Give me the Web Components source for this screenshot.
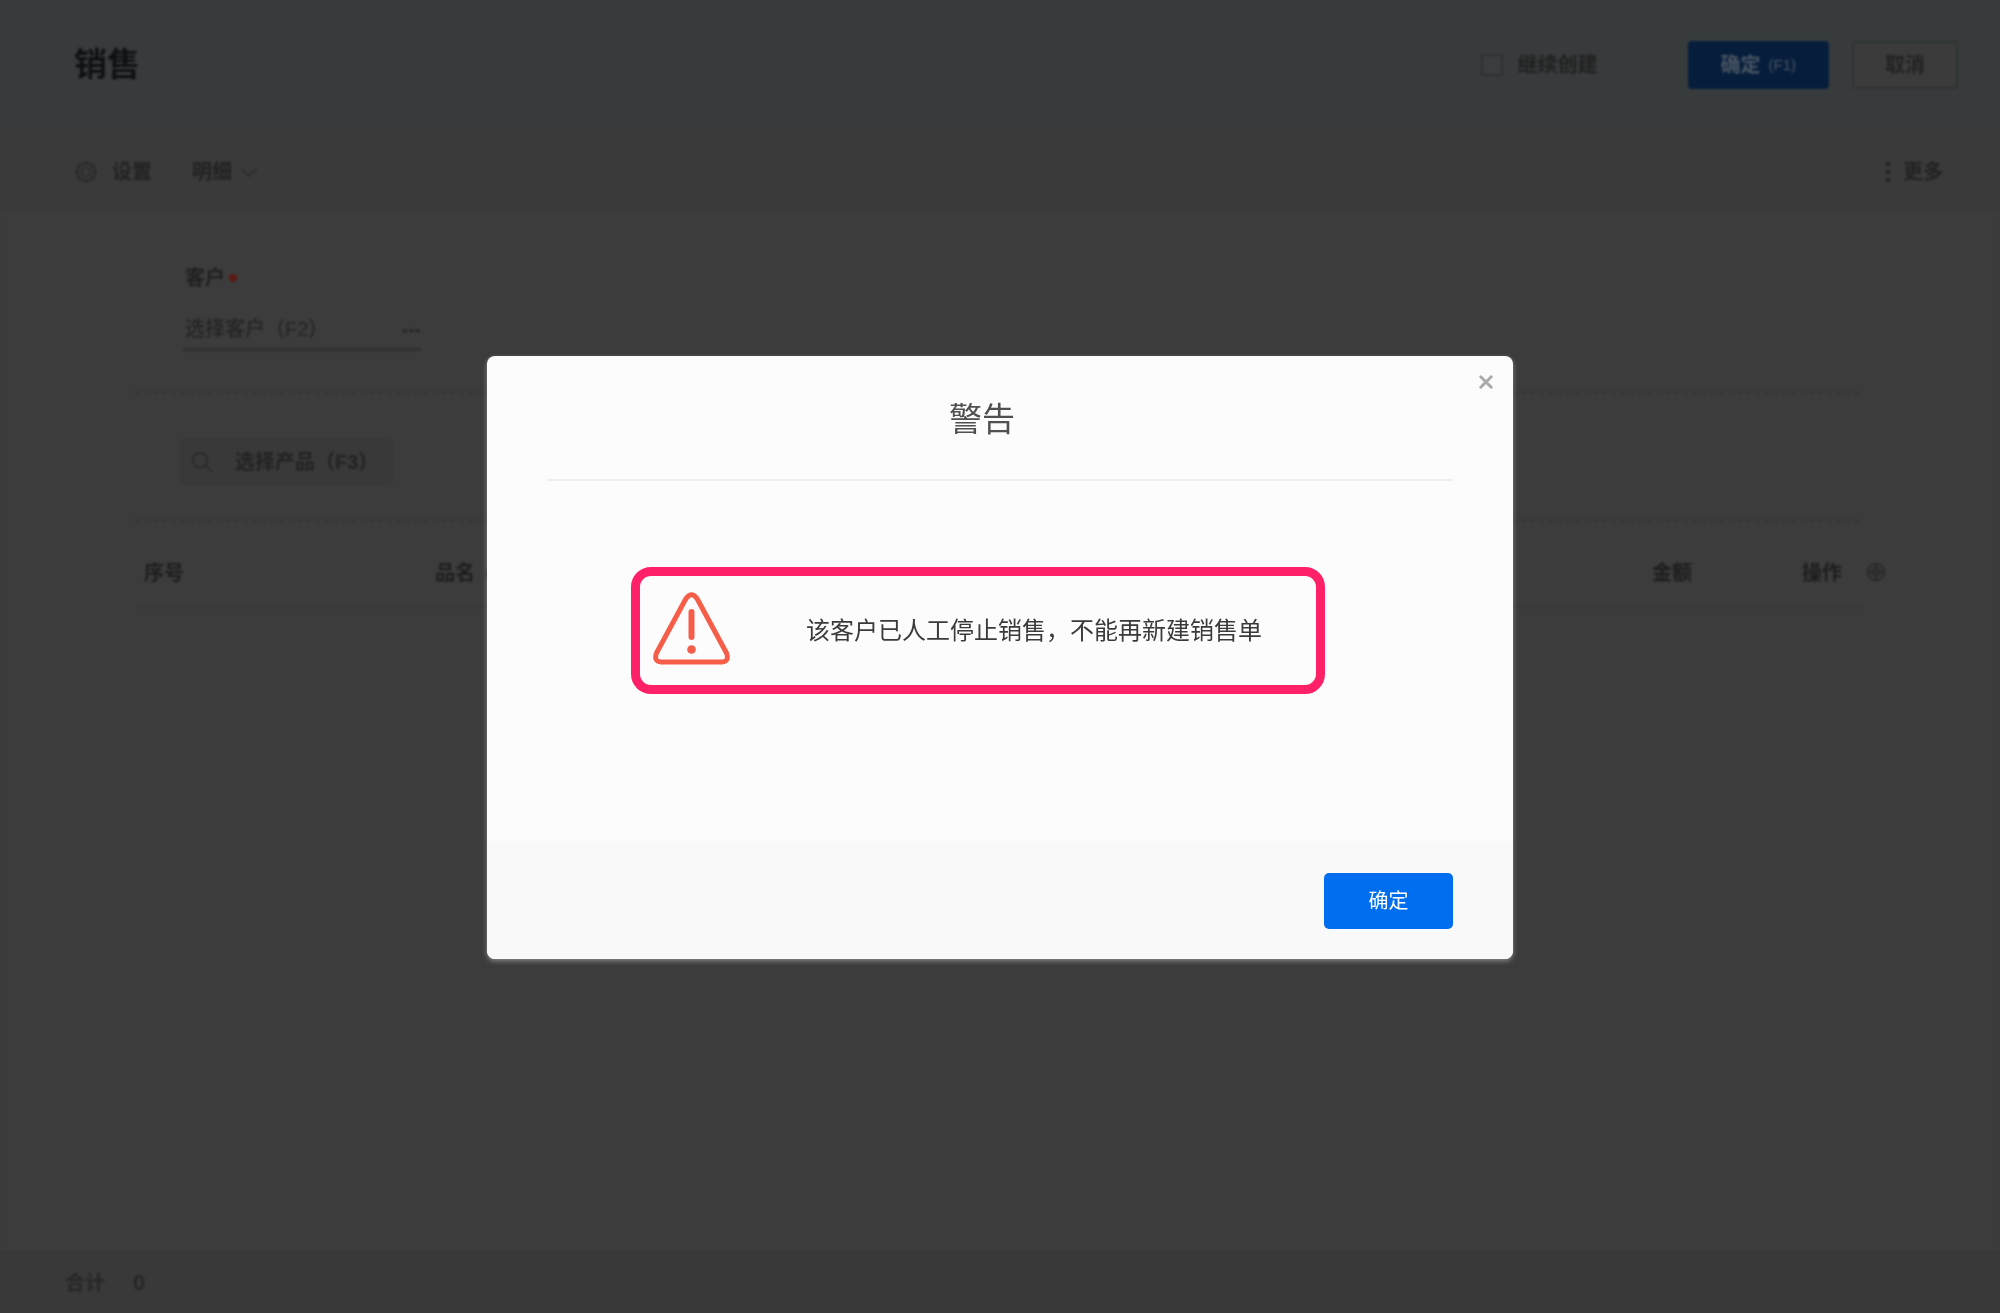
<!DOCTYPE html>
<html lang="zh-CN">
<head>
<meta charset="utf-8">
<meta name="viewport" content="width=device-width, initial-scale=1">
<title>销售</title>
<style>
    body {
        margin: 0;
        background: #3b3b3b;
        color: #202020;
        font: 20px/30px "Liberation Sans", "Noto Sans CJK SC", sans-serif;
    }
</style>
</head>
<body>
<sales-page>
    <page-header heading="销售"></page-header>
    <page-toolbar></page-toolbar>
    <sales-form></sales-form>
    <product-table></product-table>
    <page-total label="合计" value="0"></page-total>
</sales-page>
<warning-dialog heading="警告">
    <alert-message>该客户已人工停止销售，不能再新建销售单</alert-message>
</warning-dialog>

<script>
const render = (element, html) => {
    const shadow = element.attachShadow({ mode: 'open' });
    const template = document.createElement('template');
    template.innerHTML = html;
    shadow.appendChild(template.content.cloneNode(true));
};

const icons = {
    gear: '<circle cx="12" cy="12" r="10"/><circle cx="12" cy="12" r="5"/><path d="M12 0v4M12 20v4M0 12h4M20 12h4M3.500 3.500l3 3M17.500 17.500l3 3M3.500 20.500l3-3M17.500 6.500l3-3"/>',
    globe: '<circle cx="12" cy="12" r="10"/><circle cx="12" cy="12" r="5"/><path d="M12 2v20M2 12h20"/>',
    chevron: '<path d="M2 8l10 9 10-9"/>',
    search: '<circle cx="10" cy="10" r="8"/><path d="M16 16l7 7"/>',
    dots: '<path d="M4 14h5M11 14h5M18 14h5" stroke-width="3"/>',
    more: '<path d="M16 1v4M16 10v4M16 19v4" stroke-width="5"/>',
    close: '<path d="M5 5l14 14M19 5L5 19" stroke-width="4" stroke-linecap="round"/>'
};

class UiIcon extends HTMLElement {
    constructor() {
        super();
        render(this, `
            <style>
                :host {
                    display: inline-flex;
                    width: 22px;
                    height: 22px;
                    flex: none;
                }

                svg {
                    width: 100%;
                    height: 100%;
                    fill: none;
                    stroke: currentColor;
                    stroke-width: 2;
                }
            </style>
            <svg viewBox="0 0 24 24" aria-hidden="true">${icons[this.getAttribute('name')]}</svg>
        `);
    }
}

class SalesPage extends HTMLElement {
    constructor() {
        super();
        render(this, `
            <style>
                :host {
                    display: flex;
                    flex-direction: column;
                    min-height: 100vh;
                    background: #3c3c3c;
                    filter: blur(1px);
                }
            </style>
            <slot></slot>
        `);
    }
}

class PageHeader extends HTMLElement {
    constructor() {
        super();
        render(this, `
            <style>
                :host {
                    display: block;
                    background: #373b3c;
                }

                header {
                    display: flex;
                    align-items: center;
                    padding: 40px 42px 36px 74px;
                }

                h1 {
                    margin: 0 auto 0 0;
                    font-size: 33px;
                    line-height: 50px;
                    color: #0f1011;
                }

                label {
                    display: flex;
                    align-items: center;
                    gap: 15px;
                    margin-right: 90px;
                    font-weight: 700;
                }

                input {
                    appearance: none;
                    width: 22px;
                    height: 22px;
                    margin: 0;
                    border: 2px solid #2e3031;
                    border-radius: 3px;
                    background: #3b3c3d;
                }

                button {
                    height: 48px;
                    padding: 0 31px;
                    border: 2px solid #303233;
                    border-radius: 4px;
                    background: #3b3b3b;
                    font: inherit;
                    font-weight: 700;
                    color: #222;
                }

                .primary {
                    display: flex;
                    align-items: center;
                    gap: 8px;
                    margin-right: 23px;
                    border-color: #061e3c;
                    background: #061e3c;
                    color: #4a5563;
                }

                small {
                    font-size: 15px;
                    font-weight: 400;
                }
            </style>
            <header>
                <h1>${this.getAttribute('heading')}</h1>
                <label><input type="checkbox">继续创建</label>
                <button class="primary" type="button">确定<small>(F1)</small></button>
                <button type="button">取消</button>
            </header>
        `);
    }
}

class PageToolbar extends HTMLElement {
    constructor() {
        super();
        render(this, `
            <style>
                :host {
                    display: flex;
                    justify-content: space-between;
                    padding: 31px 57px 25px 75px;
                    background: #3a3a3a;
                }

                nav {
                    display: flex;
                    gap: 40px;
                }

                button {
                    display: flex;
                    align-items: center;
                    gap: 8px;
                    padding: 0;
                    border: 0;
                    background: none;
                    font: inherit;
                    font-weight: 700;
                    color: #222;
                }

                .settings {
                    gap: 15px;
                }

                .settings ui-icon, .detail ui-icon {
                    color: #292929;
                }

                .detail ui-icon {
                    width: 18px;
                    height: 18px;
                }
            </style>
            <nav>
                <button class="settings" type="button"><ui-icon name="gear"></ui-icon>设置</button>
                <button class="detail" type="button">明细<ui-icon name="chevron"></ui-icon></button>
            </nav>
            <button type="button"><ui-icon name="more"></ui-icon>更多</button>
        `);
    }
}

class SalesForm extends HTMLElement {
    constructor() {
        super();
        render(this, `
            <style>
                :host {
                    display: block;
                    padding: 51px 137px 0 135px;
                }

                .row {
                    padding: 0 48px;
                }

                label {
                    display: flex;
                    align-items: center;
                    gap: 4px;
                    margin-bottom: 16px;
                    padding-left: 2px;
                    font-weight: 700;
                }

                label i {
                    width: 8px;
                    height: 8px;
                    border-radius: 50%;
                    background: #5c1b15;
                }

                .field {
                    display: flex;
                    align-items: center;
                    box-sizing: border-box;
                    width: 238px;
                    height: 42px;
                    padding-left: 2px;
                    border-bottom: 3px solid #303030;
                }

                input {
                    flex: 1;
                    min-width: 0;
                    padding: 0;
                    border: 0;
                    background: none;
                    font: inherit;
                    font-weight: 500;
                    color: #242424;
                }

                input::placeholder {
                    color: #242424;
                    opacity: 1;
                }

                .field button {
                    display: flex;
                    padding: 0;
                    border: 0;
                    background: none;
                    color: #262626;
                }

                hr {
                    height: 3px;
                    margin: 40px 0 44px;
                    border: 0;
                    background: repeating-linear-gradient(90deg, #363636 0 5px, transparent 5px 9px);
                }

                hr:last-of-type {
                    margin: 34px 0 0;
                }

                .search {
                    display: flex;
                    align-items: center;
                    gap: 22px;
                    height: 47px;
                    margin-left: -2px;
                    padding: 0 14px 0 9px;
                    border: 1px solid #363636;
                    border-radius: 6px;
                    background: #393939;
                    font: inherit;
                    font-weight: 700;
                    color: #222;
                }

                .search ui-icon {
                    color: #2a2a2a;
                }
            </style>
            <div class="row">
                <label for="customer">客户<i></i></label>
                <div class="field">
                    <input id="customer" type="text" placeholder="选择客户（F2）">
                    <button type="button" aria-label="选择客户"><ui-icon name="dots"></ui-icon></button>
                </div>
            </div>
            <hr>
            <div class="row">
                <button class="search" type="button"><ui-icon name="search"></ui-icon>选择产品（F3）</button>
            </div>
            <hr>
        `);
    }
}

class ProductTable extends HTMLElement {
    constructor() {
        super();
        render(this, `
            <style>
                :host {
                    display: flex;
                    flex: 1;
                    align-items: flex-start;
                    gap: 3px;
                    padding: 0 114px 0 135px;
                }

                table {
                    flex: 1;
                    table-layout: fixed;
                    border-collapse: collapse;
                    border-bottom: 2px solid #393939;
                }

                th {
                    padding: 36px 9px 18px;
                    font-weight: 700;
                    text-align: left;
                    color: #1d1d1d;
                }

                th span {
                    display: flex;
                    align-items: center;
                    gap: 10px;
                }

                .number {
                    width: 273px;
                }

                .amount {
                    width: 132px;
                }

                .action {
                    width: 52px;
                }

                button {
                    display: flex;
                    margin-top: 40px;
                    padding: 0;
                    border: 0;
                    background: none;
                    color: #282828;
                }

                ui-icon {
                    width: 20px;
                    height: 20px;
                }
            </style>
            <table>
                <thead>
                    <tr>
                        <th class="number" scope="col">序号</th>
                        <th scope="col"><span>品名<ui-icon name="globe"></ui-icon></span></th>
                        <th class="amount" scope="col">金额</th>
                        <th class="action" scope="col">操作</th>
                    </tr>
                </thead>
            </table>
            <button type="button" aria-label="列设置"><ui-icon name="globe"></ui-icon></button>
        `);
    }
}

class PageTotal extends HTMLElement {
    constructor() {
        super();
        render(this, `
            <style>
                :host {
                    display: flex;
                    gap: 28px;
                    padding: 18px 65px 15px;
                    background: #393939;
                    font-weight: 700;
                    color: #262626;
                }

                output {
                    font-size: 22px;
                }
            </style>
            <span>${this.getAttribute('label')}</span>
            <output>${this.getAttribute('value')}</output>
        `);
    }
}

class AlertMessage extends HTMLElement {
    constructor() {
        super();
        render(this, `
            <style>
                :host {
                    display: flex;
                    align-items: center;
                    gap: 76px;
                    padding: 16px 13px;
                    border: 9px solid #ff2168;
                    border-radius: 20px;
                    font-size: 24px;
                    line-height: 36px;
                    color: #3a3a3a;
                }

                svg {
                    width: 77px;
                    height: 77px;
                    flex: none;
                    fill: none;
                    stroke: #f75e4a;
                    stroke-width: 5;
                    stroke-linejoin: round;
                    stroke-linecap: round;
                }

                circle {
                    fill: #f75e4a;
                    stroke: none;
                }
            </style>
            <svg viewBox="0 2 77 77" aria-hidden="true">
                <path d="M33 8.500Q38.500 1 44 8.500L73.500 63Q76.500 71.500 69 72H8Q.5 71.500 3.500 63Z"/>
                <path d="M38.500 22v25" stroke-width="6"/>
                <circle cx="38.500" cy="59.500" r="4.300"/>
            </svg>
            <span><slot></slot></span>
        `);
    }
}

class WarningDialog extends HTMLElement {
    constructor() {
        super();
        render(this, `
            <style>
                :host {
                    position: fixed;
                    inset: 0;
                    display: grid;
                    place-items: center;
                    padding-top: 2px;
                }

                section {
                    position: relative;
                    width: 1026px;
                    max-width: 100%;
                    overflow: hidden;
                    border-radius: 8px;
                    background: #fcfcfc;
                    box-shadow: 0 2px 5px rgba(255, 255, 255, .4);
                }

                h2 {
                    margin: 0 60px;
                    padding: 40px 36px 35px 0;
                    border-bottom: 2px solid #eee;
                    font-size: 33px;
                    font-weight: 400;
                    line-height: 48px;
                    text-align: center;
                    color: #505050;
                }

                .body {
                    padding: 86px 188px 147px 144px;
                }

                footer {
                    display: flex;
                    justify-content: flex-end;
                    padding: 32px 60px 30px;
                    background: #f9f9f9;
                }

                button {
                    padding: 0;
                    border: 0;
                    background: none;
                    font: inherit;
                }

                .close {
                    position: absolute;
                    top: 17px;
                    right: 18px;
                    display: flex;
                    color: #aaa;
                }

                .close ui-icon {
                    width: 18px;
                    height: 18px;
                }

                .confirm {
                    width: 129px;
                    height: 56px;
                    border-radius: 5px;
                    background: #006eee;
                    color: #fff;
                }
            </style>
            <section role="alertdialog" aria-modal="true" aria-labelledby="heading">
                <h2 id="heading">${this.getAttribute('heading')}</h2>
                <button class="close" type="button" aria-label="关闭"><ui-icon name="close"></ui-icon></button>
                <div class="body"><slot></slot></div>
                <footer><button class="confirm" type="button">确定</button></footer>
            </section>
        `);
    }
}

customElements.define('ui-icon', UiIcon);
customElements.define('sales-page', SalesPage);
customElements.define('page-header', PageHeader);
customElements.define('page-toolbar', PageToolbar);
customElements.define('sales-form', SalesForm);
customElements.define('product-table', ProductTable);
customElements.define('page-total', PageTotal);
customElements.define('alert-message', AlertMessage);
customElements.define('warning-dialog', WarningDialog);
</script>
</body>
</html>
